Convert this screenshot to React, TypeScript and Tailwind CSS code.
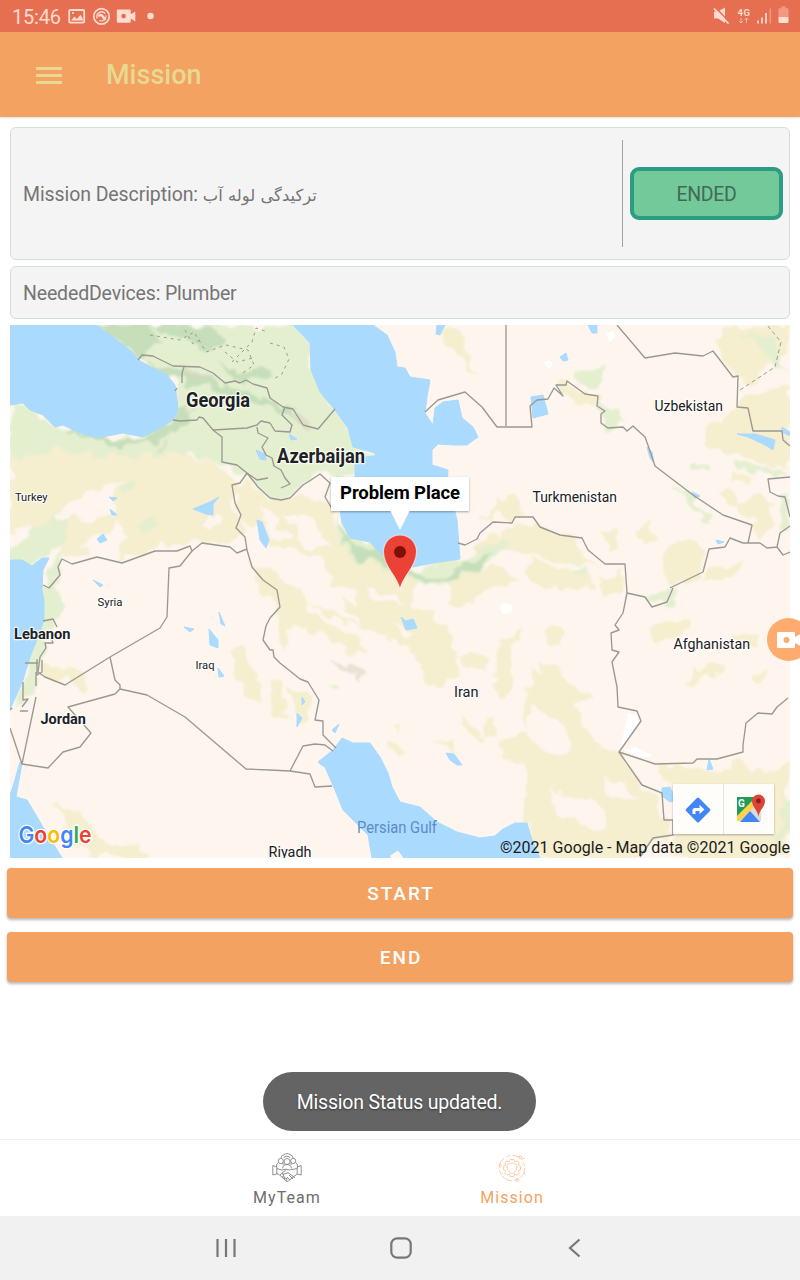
import React from 'react';

function StatusBar() {
  return (
    <div className="flex h-8 items-center justify-between bg-[#e76f51] pl-3 pr-[10px] text-[#ffdccf]">
      <div className="flex items-center">
        <span className="w-[56px] pt-[2px] text-[20px] leading-[30px] tracking-[-0.2px]">15:46</span>
        <svg width="94" height="20" viewBox="0 0 94 20" className="overflow-visible">
          <rect x="1.2" y="4" width="15" height="12.6" rx="1" fill="none" stroke="currentColor" strokeWidth="1.8" />
          <path d="M3 14.5l3.5-4 2.5 2.6 3.5-4.4 3 5.8z" fill="currentColor" />
          <circle cx="5" cy="7" r="1.1" fill="currentColor" />
          <circle cx="33.5" cy="10.4" r="7.7" fill="none" stroke="currentColor" strokeWidth="1.7" />
          <path d="M29.300 12.500a4.700 4.700 0 018-4.800M37.900 9.300a4.700 4.700 0 01-6.500 5.200" fill="none" stroke="currentColor" strokeWidth="1.300" />
          <path d="M30.500 10.500q1.500-2.500 3.500-1l3.500 4.500" fill="none" stroke="currentColor" strokeWidth="2.400" />
          <path fillRule="evenodd" d="M50 3.4h11.500q1.200 0 1.200 1.200v3.600l4.600-2.800v10l-4.600-2.800v3q0 1.200-1.200 1.200H50q-1.200 0-1.200-1.200v-11q0-1.200 1.200-1.200zM55.600 7.800a2.300 2.300 0 100 4.600 2.300 2.300 0 000-4.600z" fill="currentColor" />
          <circle cx="82.500" cy="10" r="3.200" fill="currentColor" />
        </svg>
      </div>
      <svg width="78" height="32" viewBox="712 0 78 32" className="overflow-visible">
        <path d="M714 11.500h4l7-4v15.500l-7-4.500h-4z" fill="currentColor" />
        <path d="M715.500 7.500l13.500 14" stroke="#e76f51" strokeWidth="1.600" />
        <path d="M714 8.500l14.500 15" stroke="currentColor" strokeWidth="1.700" />
        <text x="737.500" y="15.500" fontSize="9.500" fontWeight="700" fill="currentColor" textLength="12.500">4G</text>
        <path d="M741 18v5m-2-2l2 2 2-2M746.500 23v-5m-2 2l2-2 2 2" stroke="currentColor" fill="none" opacity=".65" />
        <path d="M758 20.500v3M762 17.500v6M766 13v10.500" stroke="currentColor" strokeWidth="1.700" />
        <path d="M770.300 8.500v15" stroke="currentColor" strokeWidth="1.700" opacity=".35" />
        <path d="M779.500 8.300h2v-2h4v2h2q1 0 1 1V17h-10V9.300q0-1 1-1z" fill="currentColor" opacity=".4" />
        <path d="M778.500 17h10v5q0 1-1 1h-8q-1 0-1-1z" fill="currentColor" />
      </svg>
    </div>
  );
}

const TAN = [
  'M10 455L60 450 110 455 160 452 215 462 236 480 232 500 245 530 235 545 200 541 185 545 150 550 120 560 100 552 70 560 60 556 62 545 30 525 10 535z',
  'M233 485L247 478 270 500 300 495 325 505 340 525 350 545 385 562 420 580 410 600 440 620 455 640 450 655 430 640 400 625 360 610 355 590 330 585 320 560 295 552 270 545 260 525 250 530 240 515z',
  'M250 560L270 570 300 590 310 610 345 630 370 655 345 650 320 635 290 625 285 650 275 640 280 610 270 600z',
  'M300 590L340 600 380 610 405 635 440 630 455 650 455 680 430 685 420 665 395 640 360 625 320 612z',
  'M460 655L485 653 487 670 465 670zM500 640L518 632 525 632 512 650 512 690 498 700 495 670z',
  'M270 680L283 683 285 720 275 720zM290 684L305 690 312 715 300 725z',
  'M457 717L470 722 485 745 478 745zM485 725L495 722 493 735 485 738z',
  'M500 740L530 735 520 700 535 685 530 670 560 675 585 690 592 715 605 740 619 752 640 785 662 795 665 820 672 837 650 840 640 858 535 858 527 823 520 800 530 780 520 765 505 760z',
  'M545 630L555 626 565 632 560 645 550 642z',
  'M430 570L460 562 490 540 515 522 540 525 575 538 588 560 600 568 560 560 535 555 500 550 470 565 440 580z',
  'M530 555L560 568 590 575 600 590 570 585 545 590 530 580z',
  'M495 500L520 495 520 518 500 512 480 520z',
  'M440 325L452 330 465 340 465 350 472 365 485 370 470 372 460 355 445 340z',
  'M560 384L567 381 585 394 600 396 600 410 590 405 580 410 572 400z',
  'M715 335L735 325 790 325 790 355 770 360 750 388 735 375 725 360z',
  'M705 430L737 407 750 395 790 385 790 470 770 465 735 455 705 445z',
  'M730 470L750 475 750 485 730 480zM718 493L735 490 740 505 725 510z',
  'M601 530L618 528 618 550 606 550zM635 528L650 520 652 540 640 545z',
  'M668 540L690 540 705 550 700 575 670 588 665 570zM710 567L745 565 735 578 700 580z',
  'M740 500L765 498 775 520 760 540 750 520z',
  'M685 683L700 670 718 660 722 668 700 682zM735 637L760 635 760 645 745 646z',
  'M655 765L695 768 740 765 770 775 790 760 790 858 675 858 680 800z',
  'M232 645L245 645 245 660 260 675 262 705 250 700 238 680z',
  'M40 665L75 670 90 690 83 690 70 676 45 680z',
  'M53 805L80 808 84 822 100 840 140 845 147 857 90 857 75 835z',
  'M10 490L30 500 40 520 10 530z',
  'M388 743L408 750 400 758 388 750zM390 727L400 724 398 735zM435 740L455 742 455 752z',
  'M600 580L620 570 625 590 605 600zM650 632L660 628 690 620 690 630 655 645zM755 675L768 668 765 680 755 680z',
  'M540 660L560 665 565 690 550 690z',
  'M445 575L500 566 520 580 490 590 470 605 450 600z',
];

const GREEN = [
  'M97 325L295 325 311 343 311 370 335 410 350 430 353 447 375 455 355 460 350 475 320 474 300 488 280 500 262 490 245 473 222 462 190 455 150 458 110 462 60 455 10 460 10 400 25 403 55 427 97 438 143 437 178 410 175 380 140 361 125 345z',
  'M40 560L60 545 70 520 60 515 30 530 10 548 10 562 30 565z',
  'M44 585L60 575 60 600 60 618 50 625 43 655 37 680 30 700 14 708 30 660z',
  'M55 558L62 550 60 570 50 585 44 580z',
  'M340 515L350 535 380 547 390 560 420 568 460 560 500 540 510 545 480 570 440 585 410 580 380 568 350 555 338 535z',
  'M575 375L607 368 600 385 585 390zM600 400L615 408 625 425 605 428z',
  'M673 485L690 495 715 525 700 515zM692 468L705 460 708 465 700 473z',
  'M725 460L775 468 790 475 750 470zM740 330L770 340 785 375 765 355z',
  'M645 597L673 588 668 602 655 606z',
  'M130 520L155 517 160 530 140 532zM120 485L135 480 130 495z',
  'M790 784L790 825 780 850 775 840zM780 497L790 490 790 530 780 530z',
  'M327 688L336 685 335 692zM575 570L585 568 588 577 578 577z',
];

const DEEP_GREEN = [
  'M97 325L150 325 165 345 145 350 140 361 125 345z',
  'M63 430L85 436 143 440 178 412 190 410 185 425 150 442 120 447 80 442z',
  'M145 360L175 372 205 375 225 385 260 395 290 410 300 425 270 405 230 395 200 385 165 376z',
  'M215 360L235 373 270 370 270 378 235 380z',
  'M340 520L350 543 380 553 400 566 440 575 470 566 460 578 430 580 395 570 360 558 342 540z',
  'M460 562L480 558 492 550 480 570 462 572z',
  'M150 325L215 327 225 345 200 350z',
];

const WHITES = [
  'M65 505L95 490 130 480 110 500 115 515 85 518 60 520z',
  'M80 545L120 525 130 540 115 560 90 557z',
  'M260 500L275 520 290 535 280 545 268 530z',
  'M280 515L310 515 330 545 310 548z',
  'M575 700L600 705 620 752 600 750 580 720z',
  'M550 785L562 795 590 800 608 815 600 828 560 815 553 810z',
  'M600 775L630 790 640 800 620 798z',
  'M530 705L565 730 575 750 545 755 530 740z',
  'M205 510L225 520 222 527 205 525z',
  'M270 560L295 570 340 600 360 625 320 605 290 590z',
  'M365 590L390 593 405 605 380 603z',
];

const WATER = [
  'M10 325H97L113 337 130 350 140 361 153 368 167 375 175 385 177 400 178 410 173 420 160 428 143 437 123 433 97 438 80 433 63 425 55 427 43 415 30 410 23 403 10 405z',
  'M10 560L22 560 32 566 42 558 49 558 43 570 42 590 44 600 44 620 38 637 30 657 23 680 13 703 10 710z',
  'M20 762L22 763 16 797 27 800 33 810 43 827 53 843 62 858 10 858 10 795 14 783z',
  'M293 325L310 343 311 370 320 392 335 410 348 428 353 447 375 453 375 456 355 458 355 477 340 510 342 523 350 538 370 542 377 550 385 557 413 567 433 563 460 559 457 520 455 512 447 487 448 470 432 465 432 450 438 444 453 445 467 445 478 437 473 427 462 418 458 400 443 402 435 408 433 425 425 413 427 397 430 380 410 377 405 368 397 367 395 352 387 335 373 325z',
  'M318 762L333 750 342 738 353 743 370 743 380 757 388 773 392 787 400 802 420 807 437 822 457 832 480 838 495 836 503 829 515 823 527 823 532 840 540 858 404 858 398 850 390 855 390 858 372 858 368 835 353 820 343 810 335 790 325 767 320 764z',
  'M531 397L543 395 548 414 533 418z', 'M588 325L597 325 597 333 592 333z', 'M560 357L566 353 568 360 563 361z',
  'M437 325L445 325 440 335 436 334z',
  'M193 509L210 502 219 497 213 504 213 515 206 514z', 'M257 520L262 522 269 540 266 548 260 540z',
  'M97 539L103 534 107 540 100 543zM109 497L117 498 113 501zM110 509L117 515 112 515z',
  'M256 450L265 454 266 460 260 459z', 'M289 434L297 439 291 440z',
  'M401 617L406 621 413 619 417 628 406 630z', 'M446 753L454 754 462 765 457 765 450 760z',
  'M209 629L218 640 218 648 210 645zM184 627L194 629 190 632zM219 612L225 626 221 624zM218 668L224 676 219 677z',
  'M93 580L103 585 100 587z', 'M737 434L755 434 775 440 773 450 765 445 748 437z', 'M782 427L790 432 790 436 782 432z',
  'M647 447L652 452 654 463 650 458z', 'M692 492L700 496 695 498z', 'M662 788L670 787 676 800 670 802 662 796z',
  'M709 759L713 769 707 770z', 'M332 730L339 724 335 733zM297 713L302 718 297 727zM302 697L305 702 302 705z',
  'M716 540L724 542 718 544z', 'M530 835L535 848 537 858 530 858z',
];

const BORDERS = [
  'M138 360L142 355 153 356 173 366 200 367 213 373 225 383 235 381 240 383 246 380 253 384 267 388 270 398 283 407 293 409 303 425 318 429 335 409',
  'M184 367L182 373 182 383M175 391L177 388',
  'M173 420L180 421 197 420 199 417 203 418 213 430 247 428 257 425 261 421 270 423 275 431 290 432 292 425 282 415 285 407',
  'M213 430L222 437 222 462 237 465 247 473 257 480 268 478',
  'M257 427L258 433 268 438 262 447 266 455 272 458 274 466 281 470 285 478 290 484 281 488',
  'M247 473L258 487 270 498 281 500 290 498 303 485 311 480 320 474 330 483 325 497 333 510',
  'M247 473L240 483 232 485 235 503 241 515 236 528 245 537 247 550 252 567 263 580 270 585 277 590 280 607 270 618 266 626 263 640 270 650 273 650 274 657 280 663 300 679 308 682 319 700 315 720 323 721 323 735 336 748',
  'M43 585L49 588 60 575 58 567 62 559 72 564 97 557 122 563 155 551 177 551 190 546 192 551 202 543 230 547 237 553 247 549',
  'M192 551L180 566 169 568 167 617 160 628 110 657 65 685 45 677 38 672 40 657 46 648 45 643 53 643 52 640',
  'M43 621L53 619 57 627M25 663L38 663M37 659V675L42 672V660M23 682L23 700 28 699 22 707M20 711H28',
  'M110 657L115 680 120 685 120 689 115 694 68 707 91 733 80 747 63 752 48 768 22 764 36 697M36 686V672M22 764L10 728M10 710L12 708',
  'M120 689L147 695 185 717 246 769 270 770 290 771 310 774 315 787 332 786M290 771L303 746 315 744 325 745 333 751',
  'M506 325V426M425 412L438 400 465 392 482 407 497 427 532 427 530 406 537 400 548 399 554 388 563 396 556 385 566 385 567 381 585 394 598 396 597 406 605 411 601 414 601 423 608 428 623 427 627 431 633 426 645 437 650 451 655 466 693 495 723 515 752 525 748 543',
  'M458 543L465 545 477 539 480 533 493 522 512 523 515 517 533 517 540 527 560 535 582 538 588 550 605 564 625 564 627 593 623 613 615 625 619 630 611 633 612 650 619 652 612 662 617 687 618 707 637 711 641 721 619 752 655 764 693 763 697 759 717 759 743 752 743 745 746 723 758 713 772 714 777 707 788 698',
  'M627 593L645 597 652 607 667 602 673 588M670 588L703 572 709 549 725 547 730 538 743 543 760 543 767 548 777 547 783 555 790 552M777 547L780 533 790 526',
  'M619 752L642 785 662 793 664 820 673 820 673 835 653 838 640 857',
  'M617 325L645 358 675 353 703 356 713 351 733 377 738 376 737 407 748 408 753 431 782 431 783 440 790 446',
  'M790 477L768 479 770 492 778 496 785 497 790 517',
];

interface Label { t: string; x: number; y: number; s: number; w: number; bold?: boolean }
const LABELS: Label[] = [
  { t: 'Georgia', x: 186, y: 407, s: 19.5, w: 64, bold: true },
  { t: 'Azerbaijan', x: 277, y: 463, s: 19.5, w: 88, bold: true },
  { t: 'Turkey', x: 15, y: 501, s: 11.5, w: 32.5 },
  { t: 'Uzbekistan', x: 654.5, y: 411, s: 15, w: 68.5 },
  { t: 'Turkmenistan', x: 532.5, y: 502, s: 15, w: 84.5 },
  { t: 'Syria', x: 97.5, y: 606, s: 11.5, w: 25 },
  { t: 'Lebanon', x: 14, y: 639, s: 15, w: 56.5, bold: true },
  { t: 'Iraq', x: 195.5, y: 669, s: 11.5, w: 19 },
  { t: 'Afghanistan', x: 673.5, y: 649, s: 15, w: 76.5 },
  { t: 'Iran', x: 454, y: 697, s: 15, w: 24.5 },
  { t: 'Jordan', x: 40.5, y: 724, s: 15, w: 45.5, bold: true },
  { t: 'Riyadh', x: 268.5, y: 857, s: 15, w: 43 },
];

function MapView() {
  return (
    <div className="relative h-[533px] w-[780px] overflow-hidden">
      <svg width="780" height="533" viewBox="10 325 780 533" className="block">
        <defs>
          <filter id="coast" x="-5%" y="-5%" width="110%" height="110%">
            <feTurbulence type="fractalNoise" baseFrequency="0.06" numOctaves="2" seed="4" />
            <feDisplacementMap in="SourceGraphic" scale="20" xChannelSelector="R" yChannelSelector="G" />
            <feGaussianBlur stdDeviation="1" />
          </filter>
        </defs>
        <rect x="10" y="325" width="780" height="533" fill="#fef6ee" />
        <g filter="url(#coast)">
          <path d={GREEN[0]} fill="#e4efd0" />
          {TAN.map((d) => <path key={d} d={d} fill="#f5eecf" />)}
          {GREEN.slice(1).map((d) => <path key={d} d={d} fill="#e4efd0" />)}
          {DEEP_GREEN.map((d) => <path key={d} d={d} fill="#c6dfba" />)}
          <path d="M155 445L170 436 172 442 158 450zM175 362L215 378 213 384 190 376zM292 408L305 415 310 428 298 424zM332 658L345 662 362 672 365 681 350 676z" fill="#d8d5c2" opacity=".6" />
          {WHITES.map((d) => <path key={d} d={d} fill="#fef6ee" />)}
        </g>
        {WATER.map((d) => <path key={d} d={d} fill="#abdaff" strokeLinejoin="round" stroke="#abdaff" />)}
        <path d="M500 606l5-3 8 3-2 7-9 1zM606 334l6-3 4 5-6 6zM544 362l5-2 4 4-5 5zM628 713l9 3 1 7-18 27zM624 750l12-3 17 9-10 2z" fill="#fff" />
        {BORDERS.map((d) => <path key={d} d={d} fill="none" stroke="#9b9892" strokeWidth="1.350" strokeLinejoin="round" />)}
        <g fill="none" stroke="#9c9b90" strokeDasharray="3 4">
          <path d="M150 335l30 5 14-8 12 20 20-7 22 5 6 15-14 10M185 330l8 14 10-6M232 362l20-20 4-14 12 4M270 343l14 4 5 12-7 15-10 6M225 352l12 10 16-4" />
          <path d="M768 326l13 16-6 25-38 25" strokeDasharray="4 3" />
        </g>
        <g fontFamily="Roboto, sans-serif">
          {LABELS.map((l) => (
            <text key={l.t} x={l.x} y={l.y} fontSize={l.s} textLength={l.w} lengthAdjust="spacingAndGlyphs" fontWeight={l.bold ? 700 : 400} fill="#202124" stroke="#fff" strokeOpacity=".8" strokeWidth="2.500" paintOrder="stroke" strokeLinejoin="round">{l.t}</text>
          ))}
          <text x="357" y="833" fontSize="17" textLength="80" lengthAdjust="spacingAndGlyphs" fill="#5b8cc6">Persian Gulf</text>
          <text x="500" y="853" fontSize="16" textLength="290" fill="#1b1b1b">©2021 Google - Map data ©2021 Google</text>
        </g>
        <text x="18.500" y="843" fontSize="23" fontWeight="600" fontFamily="Inter, sans-serif" textLength="73" lengthAdjust="spacingAndGlyphs" stroke="#fff" strokeWidth="2.500" paintOrder="stroke">
          <tspan fill="#4285f4">G</tspan><tspan fill="#ea4335">o</tspan><tspan fill="#fbbc05">o</tspan><tspan fill="#4285f4">g</tspan><tspan fill="#34a853">l</tspan><tspan fill="#ea4335">e</tspan>
        </text>
        <path d="M400 590C398.500 577 383.500 567 383.500 551.500a16.500 16.500 0 0133 0C416.500 567 401.500 577 400 590z" fill="#ea4335" stroke="#fff" strokeOpacity=".7" strokeWidth="1" />
        <circle cx="400" cy="552" r="6" fill="#7f1009" />
      </svg>
      <div className="absolute left-[321px] top-[152px] flex h-[34px] w-[138px] items-center justify-center bg-white text-[18.5px] font-bold tracking-[-0.1px] text-black shadow-[0_1px_2px_rgba(0,0,0,0.35)]">
        <span className="whitespace-nowrap">Problem Place</span>
        <svg width="20" height="20" viewBox="0 0 20 20" className="absolute left-[59px] top-[33px]"><path d="M0 0h20L10 20z" fill="#fff" /></svg>
      </div>
      <div className="absolute left-[663px] top-[459px] flex h-[50px] w-[101px] bg-white/90 shadow-[0_1px_2px_rgba(0,0,0,0.3)]">
        <div className="flex w-[51px] items-center justify-center border-r border-[#e4e4e0] pt-px">
          <svg width="28" height="28" viewBox="0 0 28 28">
            <rect x="4.800" y="4.800" width="18.400" height="18.400" rx="1.500" fill="#4285f4" transform="rotate(45 14 14)" />
            <path d="M8.500 18v-3.500q0-2.500 2.500-2.500h4.500V8.800l5 4.700-5 4.600V15h-4v3z" fill="#fff" />
          </svg>
        </div>
        <div className="flex flex-1 items-center justify-center">
          <svg width="32" height="32" viewBox="0 0 32 32" className="overflow-visible">
            <path d="M4 4h24L4 28z" fill="#1f9d58" />
            <path d="M16 16L28 4v24H4z" fill="#d9dcdd" />
            <path d="M4 23L22 5l4 4L7 28H4z" fill="#fdd34e" />
            <path d="M7 29L17 18l10 11z" fill="#4285f4" />
            <text x="5" y="13.500" fontSize="10" fontWeight="700" fill="#fff" fontFamily="Roboto, sans-serif">G</text>
            <path d="M25.500 24C25 17 19 14 19 8a6.500 6.500 0 0113 0C32 14 26 17 25.500 24z" fill="#dc4437" />
            <circle cx="25.500" cy="8" r="2.400" fill="#7f231c" />
          </svg>
        </div>
      </div>
    </div>
  );
}

function TeamIcon() {
  return (
    <svg width="30" height="30" viewBox="0 0 30 30" fill="none" stroke="#858585" strokeWidth=".9" strokeLinejoin="round">
      <path d="M.8 12.500l4 1.500v7l-4 1zM29.200 12.500l-4 1.500v7l4 1z" />
      <path d="M4.800 15.500l5 1.500 4-.8 3.500.8 8-1.500M4.800 20.500l3 1.500 6 6q1 1 2.500 0l8.900-7" />
      <path d="M14 17l-4 3q1.500 2 4 .5l2-.8 7 5M8 22l2-1.500 2 1.500-1.500 2 2.500 0-1 2 3-.5-.5 2M17 22l4 4M15 24l3 3" />
      <circle cx="15" cy="8.500" r="3" /><circle cx="8.800" cy="8" r="2.600" /><circle cx="21.200" cy="8" r="2.600" />
      <path d="M9 5q0-3 3-3.200Q13 .6 15 .6t3 1.200Q21 2 21 5M12 5q0-1.800 3-1.800T18 5" />
      <path d="M10.800 15.500v-1.500q.5-2.500 4.200-2.500t4.200 2.500v1.500M4.500 14q-.5-3.500 2-4.500M25.500 14q.5-3.500-2-4.500M11 12V9.500M19 12V9.500" />
    </svg>
  );
}

function MissionIcon() {
  return (
    <svg width="30" height="30" viewBox="0 0 30 30" fill="none" stroke="#f4a261" strokeWidth=".8" opacity=".65">
      <circle cx="15" cy="15" r="12.700" strokeDasharray="11 2.500 4 2.500" />
      <path d="M13 6.500h4l.7 2.300 2.300-1 2.300 2.300-1 2.300 2.200.8v3.600l-2.200.7 1 2.300-2.300 2.400-2.300-1-.7 2.300h-4l-.7-2.300-2.300 1-2.300-2.400 1-2.300-2.200-.7v-3.600l2.200-.8-1-2.300L10 7.800l2.300 1z" />
      <path d="M15 10c4 2 5 0 5 3 0 4-2 6.500-5 8-3-1.500-5-4-5-8 0-3 1-1 5-3z" />
      <circle cx="3" cy="12.500" r="1.300" /><circle cx="23.500" cy="4" r="1.300" /><circle cx="20.500" cy="27" r="1.500" />
      <path d="M25 6l3-1M27 20l2 2M4 22l2-2" />
    </svg>
  );
}

export default function App() {
  return (
    <div className="relative flex h-[1280px] w-[800px] flex-col overflow-hidden bg-white font-[Roboto,'Liberation_Sans',sans-serif]">
      <StatusBar />
      <header className="flex h-[85px] items-center bg-[#f4a261] pl-9 pt-[2px] shadow-[0_1px_2px_rgba(0,0,0,0.12)]">
        <div className="flex w-[26px] flex-col gap-[4px]">
          <span className="h-[3px] bg-[#e9d892]" />
          <span className="h-[3px] bg-[#e9d892]" />
          <span className="h-[3px] bg-[#e9d892]" />
        </div>
        <h1 className="ml-[44px] text-[27px] font-medium leading-none text-[#e9d892]">Mission</h1>
      </header>

      <main className="flex flex-col px-[10px] pt-[10px]">
        <section className="flex h-[133px] items-center rounded-[6px] border border-[#d5dede] bg-[#f4f4f4] pl-3 pr-[6px]">
          <p className="flex flex-1 items-baseline whitespace-pre pt-[2px] text-[19.5px] tracking-[-0.09px] text-[#757575]">
            <span>Mission Description: </span>
            <span dir="rtl" className="font-['DejaVu_Sans',sans-serif] text-[16.4px] tracking-normal">ترکیدگی لوله آب</span>
          </p>
          <div className="h-[107px] w-px bg-[#a2a2a2]" />
          <button className="ml-[7px] h-[53px] w-[153px] rounded-[9px] border-4 border-[#2a9d82] bg-[#74c99b] pt-[2px] text-[19.5px] tracking-[-0.3px] text-[#3e6b56]">ENDED</button>
        </section>
        <section className="mt-[6px] flex h-[53px] items-center rounded-[6px] border border-[#d5dede] bg-[#f4f4f4] pl-3 pt-[3px] text-[19.5px] tracking-[-0.16px] text-[#757575]">
          NeededDevices: Plumber
        </section>
        <div className="mt-[6px]"><MapView /></div>
      </main>

      <div className="mt-[10px] flex flex-col gap-[14px] px-[7px]">
        <button className="h-[50px] rounded-[4px] bg-[#f4a261] pl-[2px] pt-[2px] text-[19px] font-medium tracking-[2px] text-white shadow-[0_2px_3px_rgba(0,0,0,0.28)]">START</button>
        <button className="h-[50px] rounded-[4px] bg-[#f4a261] pl-[2px] pt-[2px] text-[19px] font-medium tracking-[2px] text-white shadow-[0_2px_3px_rgba(0,0,0,0.28)]">END</button>
      </div>

      <nav className="mt-auto flex h-[77px] shrink-0 justify-center border-t border-[#f0f0f0] text-[16px] tracking-[1.05px]">
        <div className="flex w-[225px] flex-col items-center pr-px pt-[13px] text-[#6e6e6e]">
          <TeamIcon />
          <span className="mt-[5px] leading-5">MyTeam</span>
        </div>
        <div className="flex w-[225px] flex-col items-center pr-px pt-[13px] text-[#f4a261]">
          <MissionIcon />
          <span className="mt-[5px] leading-5">Mission</span>
        </div>
      </nav>
      <footer className="flex h-16 shrink-0 items-center justify-between bg-[#f1f1f1] pl-[215px] pr-[214px] text-[#777]">
        <svg width="22" height="22" viewBox="0 0 22 22" stroke="currentColor" strokeWidth="2.200"><path d="M2.500 2v18M11 2v18M19.500 2v18" /></svg>
        <svg width="22" height="22" viewBox="0 0 22 22" fill="none" stroke="currentColor" strokeWidth="2.200"><rect x="1.300" y="1.300" width="19.400" height="19.400" rx="6" /></svg>
        <svg width="22" height="22" viewBox="0 0 22 22" fill="none" stroke="currentColor" strokeWidth="2.200"><path d="M15.500 2.500L6 11l9.500 8.500" /></svg>
      </footer>

      <div className="absolute left-[263px] top-[1072px] flex h-[59px] w-[273px] items-center justify-center rounded-full bg-[#646464] pt-[2px] text-[19.5px] tracking-[-0.2px] text-white [text-shadow:0_1px_2px_rgba(0,0,0,0.5)]">
        Mission Status updated.
      </div>
      <div className="absolute left-[767px] top-[618px] flex h-[43px] w-[43px] items-center rounded-full bg-[#ffa768] pl-[10px] opacity-95">
        <svg width="28" height="16" viewBox="0 0 28 16"><path fillRule="evenodd" d="M1 0h16q1 0 1 1v4l9-5v16l-9-5v4q0 1-1 1H1q-1 0-1-1V1q0-1 1-1zM9.500 5a3 3 0 100 6 3 3 0 000-6z" fill="#fff" /></svg>
      </div>
    </div>
  );
}
